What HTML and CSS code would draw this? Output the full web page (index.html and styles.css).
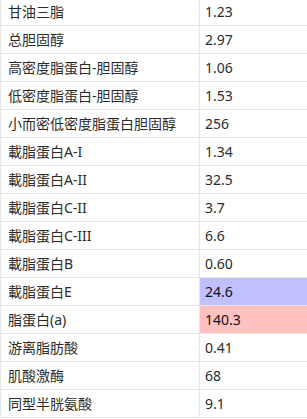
FILE: index.html
```html
<!DOCTYPE html>
<html lang="zh-CN">
<head>
<meta charset="utf-8">
<title>血脂检测结果</title>
<link rel="stylesheet" href="styles.css">
</head>
<body>
<table class="results">
  <tbody>
    <tr><td class="name">甘油三脂</td><td class="val">1.23</td></tr>
    <tr><td class="name">总胆固醇</td><td class="val">2.97</td></tr>
    <tr><td class="name">高密度脂蛋白-胆固醇</td><td class="val">1.06</td></tr>
    <tr><td class="name">低密度脂蛋白-胆固醇</td><td class="val">1.53</td></tr>
    <tr><td class="name">小而密低密度脂蛋白胆固醇</td><td class="val">256</td></tr>
    <tr><td class="name">載脂蛋白A-I</td><td class="val">1.34</td></tr>
    <tr><td class="name">載脂蛋白A-II</td><td class="val">32.5</td></tr>
    <tr><td class="name">載脂蛋白C-II</td><td class="val">3.7</td></tr>
    <tr><td class="name">載脂蛋白C-III</td><td class="val">6.6</td></tr>
    <tr><td class="name">載脂蛋白B</td><td class="val">0.60</td></tr>
    <tr><td class="name">載脂蛋白E</td><td class="val low">24.6</td></tr>
    <tr><td class="name">脂蛋白(a)</td><td class="val high">140.3</td></tr>
    <tr><td class="name">游离脂肪酸</td><td class="val">0.41</td></tr>
    <tr><td class="name">肌酸激酶</td><td class="val">68</td></tr>
    <tr><td class="name">同型半胱氨酸</td><td class="val">9.1</td></tr>
  </tbody>
</table>
</body>
</html>
```

FILE: styles.css
```css
html, body {
  margin: 0;
  padding: 0;
  overflow: hidden;
  background: #fff;
}

.results {
  border-collapse: collapse;
  width: 308px;
  margin-top: -3px;
  font-family: "Noto Sans", "Noto Sans CJK SC", sans-serif;
  font-size: 14px;
  color: #2b2b2b;
  table-layout: fixed;
}

.results td {
  border: 1px solid #e6e6e6;
  height: 27px;
  padding: 0 0 0 7px;
  line-height: 27px;
  box-sizing: border-box;
  white-space: nowrap;
  vertical-align: middle;
}

.results td.name {
  width: 199px;
}

.results td.val {
  padding-left: 5px;
}

.results td.low {
  background: #c0c0ff;
  color: #111;
}

.results td.high {
  background: #ffc0c0;
  color: #111;
}
```
